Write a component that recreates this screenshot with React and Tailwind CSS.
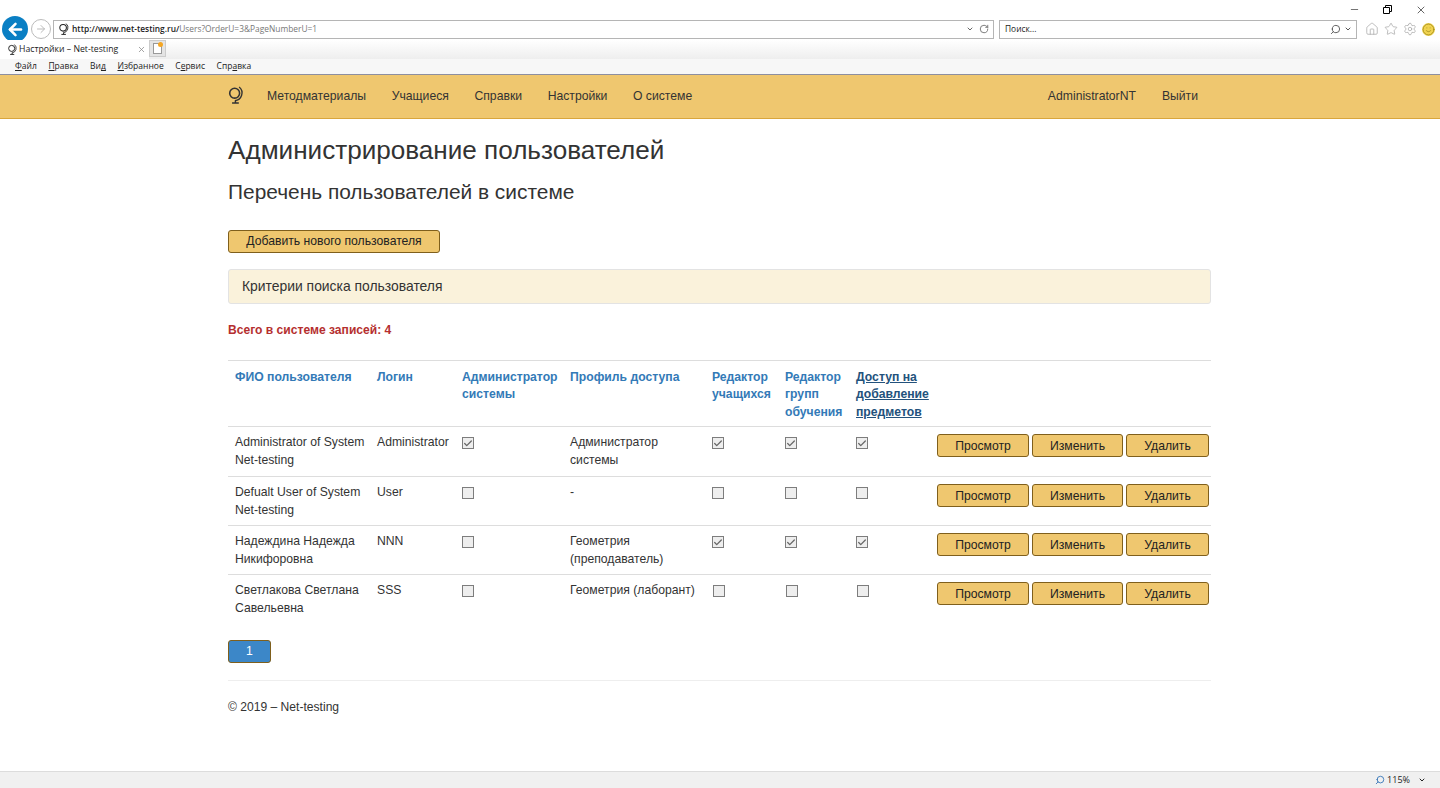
import { Check, X, Minus, RotateCw, Search, Home, Star, Settings, Smile, ArrowLeft, ArrowRight, ChevronDown } from 'lucide-react';

const users = [
  { name: 'Administrator of System Net-testing', login: 'Administrator', admin: true, profile: 'Администратор системы', editor: true, groups: true, access: true },
  { name: 'Defualt User of System Net-testing', login: 'User', admin: false, profile: '-', editor: false, groups: false, access: false },
  { name: 'Надеждина Надежда Никифоровна', login: 'NNN', admin: false, profile: 'Геометрия (преподаватель)', editor: true, groups: true, access: true },
  { name: 'Светлакова Светлана Савельевна', login: 'SSS', admin: false, profile: 'Геометрия (лаборант)', editor: false, groups: false, access: false },
];

// small globe used as the site logo and favicon
const Globe = ({ size = 16, className = '' }) => (
  <svg width={size} height={size} viewBox="0 0 16 16" fill="none" stroke="currentColor" className={className}>
    <circle cx="6.8" cy="6.4" r="4.4" strokeWidth="1.4" />
    <path d="M10.8 0.8A6.9 6.9 0 0 1 7 13" strokeWidth="1.2" />
    <path d="M7.5 13v2M4.5 15.2h6" strokeWidth="1.3" />
  </svg>
);

const Checkbox = ({ checked, className = '' }) => (
  <span className={`mt-[3px] flex h-[12px] w-[12px] items-center justify-center border border-[#7d7d7d] bg-[#eeeeee] ${className}`}>
    {checked && <Check size={11} strokeWidth={3} className="text-[#666]" />}
  </span>
);

const Btn = ({ children, className = '' }) => (
  <button className={`h-[23px] rounded-[3px] border border-[#7f5f1c] bg-[#efc76f] text-[12.2px] leading-none text-[#222] ${className}`}>
    {children}
  </button>
);

const headCls = 'px-[7px] pt-[8px] pb-[5px] text-left align-top text-[12.2px] leading-[17.4px] font-bold text-[#337ab7]';
const cellCls = 'px-[7px] pt-[7px] pb-[6px] align-top text-[12.2px] leading-[17.4px] text-[#333]';

function BrowserChrome() {
  return (
    <div className="h-[75px] border-b border-[#8d8fa0] bg-white font-['Open_Sans',sans-serif] text-[#222]">
      <div className="flex h-[18px] items-start justify-end gap-[23px] pr-[13px] pt-[4px] text-black">
        <Minus size={11} strokeWidth={1.2} />
        <svg width="9" height="9" viewBox="0 0 9 9" fill="none" stroke="currentColor" className="mt-[1px]">
          <path d="M0.5 2.5h6v6h-6zM2.5 2.5v-2h6v6h-2" />
        </svg>
        <X size={12} strokeWidth={1.2} />
      </div>
      <div className="flex h-[22px] items-center pl-[2px] pr-[5px]">
        <span className="flex h-[26px] w-[26px] items-center justify-center rounded-full bg-[#0a7fc4]">
          <ArrowLeft size={19} strokeWidth={3.2} className="text-white" />
        </span>
        <span className="ml-[3px] flex h-[20px] w-[20px] items-center justify-center rounded-full border border-[#bbb]">
          <ArrowRight size={12} className="text-[#bbb]" />
        </span>
        <div className="ml-[2px] flex h-[19px] w-[941px] items-center border border-[#b5b5b5] pl-[4px] pr-[4px] text-[8.4px]">
          <Globe size={12} />
          <span className="ml-[2px] font-semibold">http://www.net-testing.ru/</span>
          <span className="text-[#777]">Users?OrderU=3&amp;PageNumberU=1</span>
          <span className="ml-auto flex items-center gap-[5px] text-[#666]">
            <ChevronDown size={8} strokeWidth={3} />
            <RotateCw size={10} />
          </span>
        </div>
        <div className="ml-[5px] flex h-[19px] w-[358px] items-center border border-[#b5b5b5] pl-[5px] pr-[4px] text-[8.4px]">
          <span>Поиск...</span>
          <span className="ml-auto flex items-center gap-[3px] text-[#555]">
            <Search size={11} className="-scale-x-100" />
            <ChevronDown size={8} strokeWidth={3} />
          </span>
        </div>
        <div className="ml-auto flex items-center gap-[5px] text-[#a9a9a9]">
          <Home size={14} strokeWidth={1.3} />
          <Star size={14} strokeWidth={1.3} />
          <Settings size={14} strokeWidth={1.3} />
          <Smile size={13} strokeWidth={1.5} className="rounded-full bg-[#f0d34f] text-[#a08a20]" />
        </div>
      </div>
      <div className="flex h-[19px] bg-gradient-to-b from-white to-[#eeeeee]">
        <div className="flex h-[19px] w-[149px] items-center bg-white pl-[7px] pr-[3px] text-[8.7px]">
          <Globe size={11} />
          <span className="ml-[1px]">Настройки – Net-testing</span>
          <X size={9} className="ml-auto text-[#888]" />
        </div>
        <div className="flex h-[17px] w-[17px] items-center justify-center border border-[#ccc] bg-[#e4e4e4]">
          <span className="relative block h-[11px] w-[9px] border border-[#999] bg-white">
            <span className="absolute -right-[2px] -top-[2px] h-[5px] w-[5px] rounded-full bg-[#f5a623]" />
          </span>
        </div>
      </div>
      <div className="flex h-[15px] items-center gap-[11.6px] bg-[#f7f7f7] pl-[15px] text-[8.5px]">
        <span><u>Ф</u>айл</span>
        <span><u>П</u>равка</span>
        <span>Ви<u>д</u></span>
        <span><u>И</u>збранное</span>
        <span>С<u>е</u>рвис</span>
        <span>Спр<u>а</u>вка</span>
      </div>
    </div>
  );
}

function Navbar() {
  return (
    <div className="flex h-[44px] items-center border-b border-[#d9a63c] bg-[#efc76f] pl-[227px] pr-[242px] text-[12.2px] text-[#333]">
      <Globe size={18} className="-mt-[3px] text-[#333]" />
      <div className="ml-[22px] flex gap-[25.6px]">
        <span>Методматериалы</span>
        <span>Учащиеся</span>
        <span>Справки</span>
        <span>Настройки</span>
        <span>О системе</span>
      </div>
      <div className="ml-auto flex gap-[26px]">
        <span>AdministratorNT</span>
        <span>Выйти</span>
      </div>
    </div>
  );
}

export default function App() {
  return (
    <div className="flex h-[788px] flex-col overflow-hidden bg-white font-['Liberation_Sans',Arial,sans-serif]">
      <BrowserChrome />
      <Navbar />
      <div className="ml-[228px] w-[983px] flex-1">
        <h2 className="mt-[15px] text-[26.1px] leading-[32px] text-[#333]">Администрирование пользователей</h2>
        <h3 className="mt-[13px] text-[20.9px] leading-[26px] text-[#333]">Перечень пользователей в системе</h3>
        <Btn className="mt-[25px] block w-[212px]">Добавить нового пользователя</Btn>
        <div className="mt-[16px] flex h-[35px] items-center rounded-[3px] border border-[#e3e3e3] bg-[#faf2db] pl-[13px] text-[13.9px] text-[#333]">
          Критерии поиска пользователя
        </div>
        <p className="mt-[18px] text-[12.1px] leading-[17px] font-bold text-[#b52f2f]">Всего в системе записей: 4</p>

        <table className="mt-[21px] w-[983px] table-fixed border-t border-[#ddd]">
          <colgroup>
            <col className="w-[142px]" />
            <col className="w-[85px]" />
            <col className="w-[108px]" />
            <col className="w-[142px]" />
            <col className="w-[73px]" />
            <col className="w-[71px]" />
            <col className="w-[81px]" />
            <col />
          </colgroup>
          <thead>
            <tr className="h-[66px]">
              <th className={headCls}>ФИО пользователя</th>
              <th className={headCls}>Логин</th>
              <th className={headCls}>Администратор системы</th>
              <th className={headCls}>Профиль доступа</th>
              <th className={headCls}>Редактор учащихся</th>
              <th className={headCls}>Редактор групп обучения</th>
              <th className={`${headCls} text-[#23527c] underline`}>Доступ на добавление предметов</th>
              <th />
            </tr>
          </thead>
          <tbody>
            {users.map((u, i) => {
              // the last row's checkboxes sit one pixel further right in the picture
              const shift = i === 3 ? 'ml-[1px]' : '';
              return (
                <tr key={u.login} className={`border-t border-[#ddd] ${i === 0 ? 'h-[50px]' : 'h-[49px]'}`}>
                  <td className={`${cellCls} !pr-[3px]`}>{u.name}</td>
                  <td className={cellCls}>{u.login}</td>
                  <td className={cellCls}><Checkbox checked={u.admin} /></td>
                  <td className={cellCls}>{u.profile}</td>
                  <td className={cellCls}><Checkbox checked={u.editor} className={shift} /></td>
                  <td className={cellCls}><Checkbox checked={u.groups} className={shift} /></td>
                  <td className={cellCls}><Checkbox checked={u.access} className={shift} /></td>
                  <td className="pl-[7px] pt-[7px] align-top">
                    <div className="flex gap-[3px]">
                      <Btn className="w-[92px]">Просмотр</Btn>
                      <Btn className="w-[91px]">Изменить</Btn>
                      <Btn className="w-[83px]">Удалить</Btn>
                    </div>
                  </td>
                </tr>
              );
            })}
          </tbody>
        </table>

        <button className="mt-[16px] block h-[23px] w-[43px] rounded-[3px] border border-[#7f5f1c] bg-[#3c87c8] text-[12.2px] leading-none text-white">1</button>
        <div className="mt-[17px] border-t border-[#eee] pt-[18px] text-[12.1px] leading-[17px] text-[#333]">© 2019 – Net-testing</div>
      </div>
      <div className="flex h-[17px] items-center justify-end gap-[8px] border-t border-[#dcdcdc] bg-[#f0f0f0] pr-[14px] font-['Open_Sans',sans-serif] text-[9px] text-[#222]">
        <span className="flex items-center gap-[2px]">
          <Search size={10} className="-scale-x-100 text-[#2a6db5]" />
          115%
        </span>
        <ChevronDown size={8} strokeWidth={3} />
      </div>
    </div>
  );
}
